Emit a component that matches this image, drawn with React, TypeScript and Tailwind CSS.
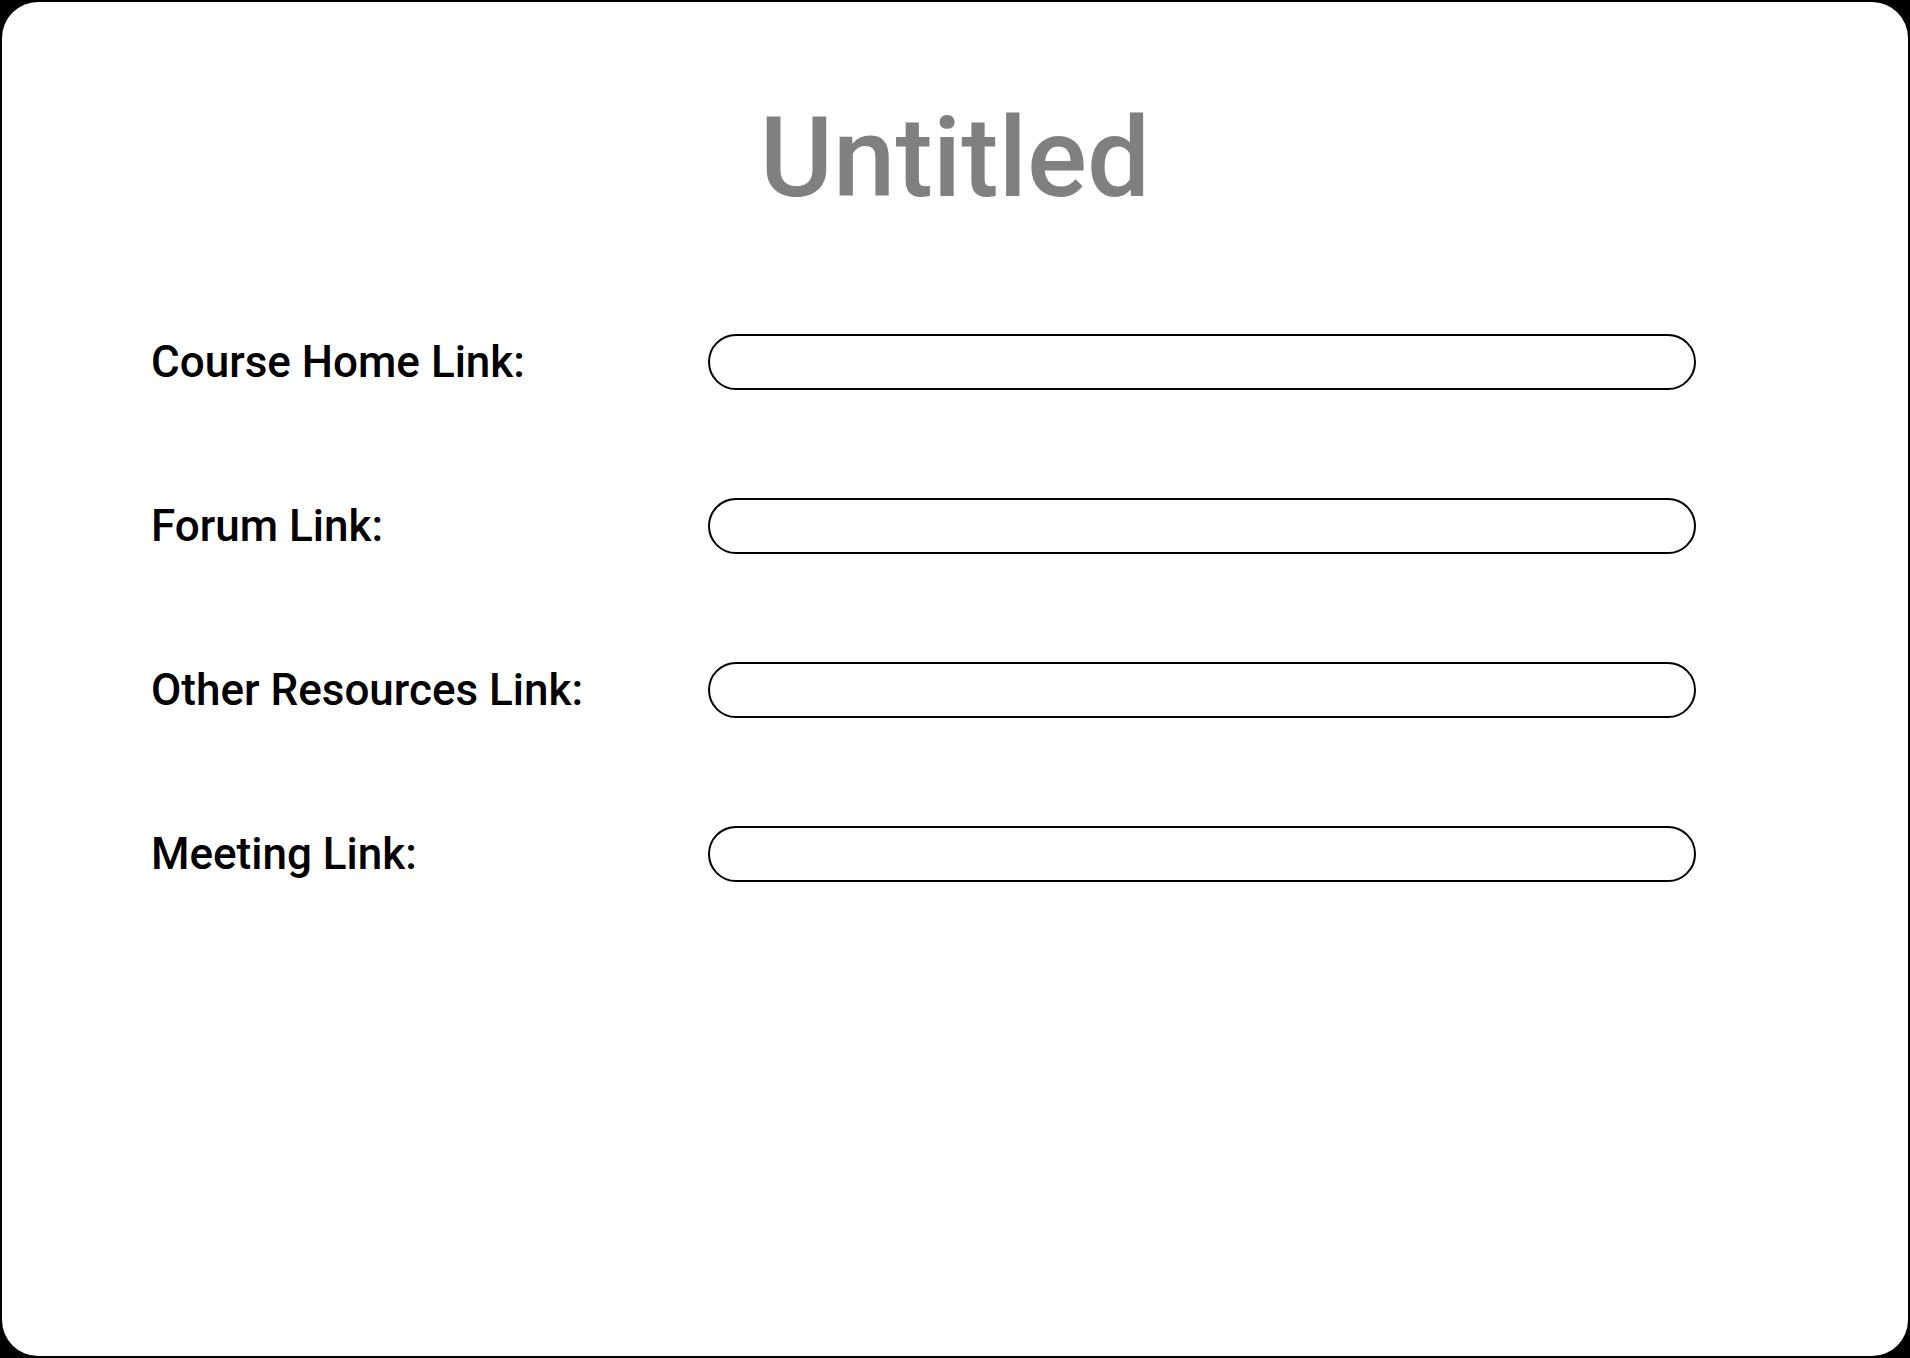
import React from "react";

const labels = [
  "Course Home Link:",
  "Forum Link:",
  "Other Resources Link:",
  "Meeting Link:",
];

export default function App() {
  return (
    <div
      className="h-[1358px] w-[1910px] bg-black p-[2px]"
      style={{ fontFamily: "Roboto, 'Liberation Sans', sans-serif" }}
    >
      <div className="h-[1354px] w-full bg-white rounded-[36px] pt-[100px]">
        <h1 className="text-center text-[112px] leading-none font-medium text-[#808080]">
          Untitled
        </h1>
        <div className="mt-[120px] flex flex-col gap-[108px] pl-[149px]">
          {labels.map((l) => (
            <div key={l} className="flex items-center">
              <label className="w-[557px] text-[44px] leading-none font-medium text-black">
                {l}
              </label>
              <input
                type="text"
                className="w-[988px] h-[56px] border-2 border-black rounded-full bg-white px-6 outline-none"
              />
            </div>
          ))}
        </div>
      </div>
    </div>
  );
}
